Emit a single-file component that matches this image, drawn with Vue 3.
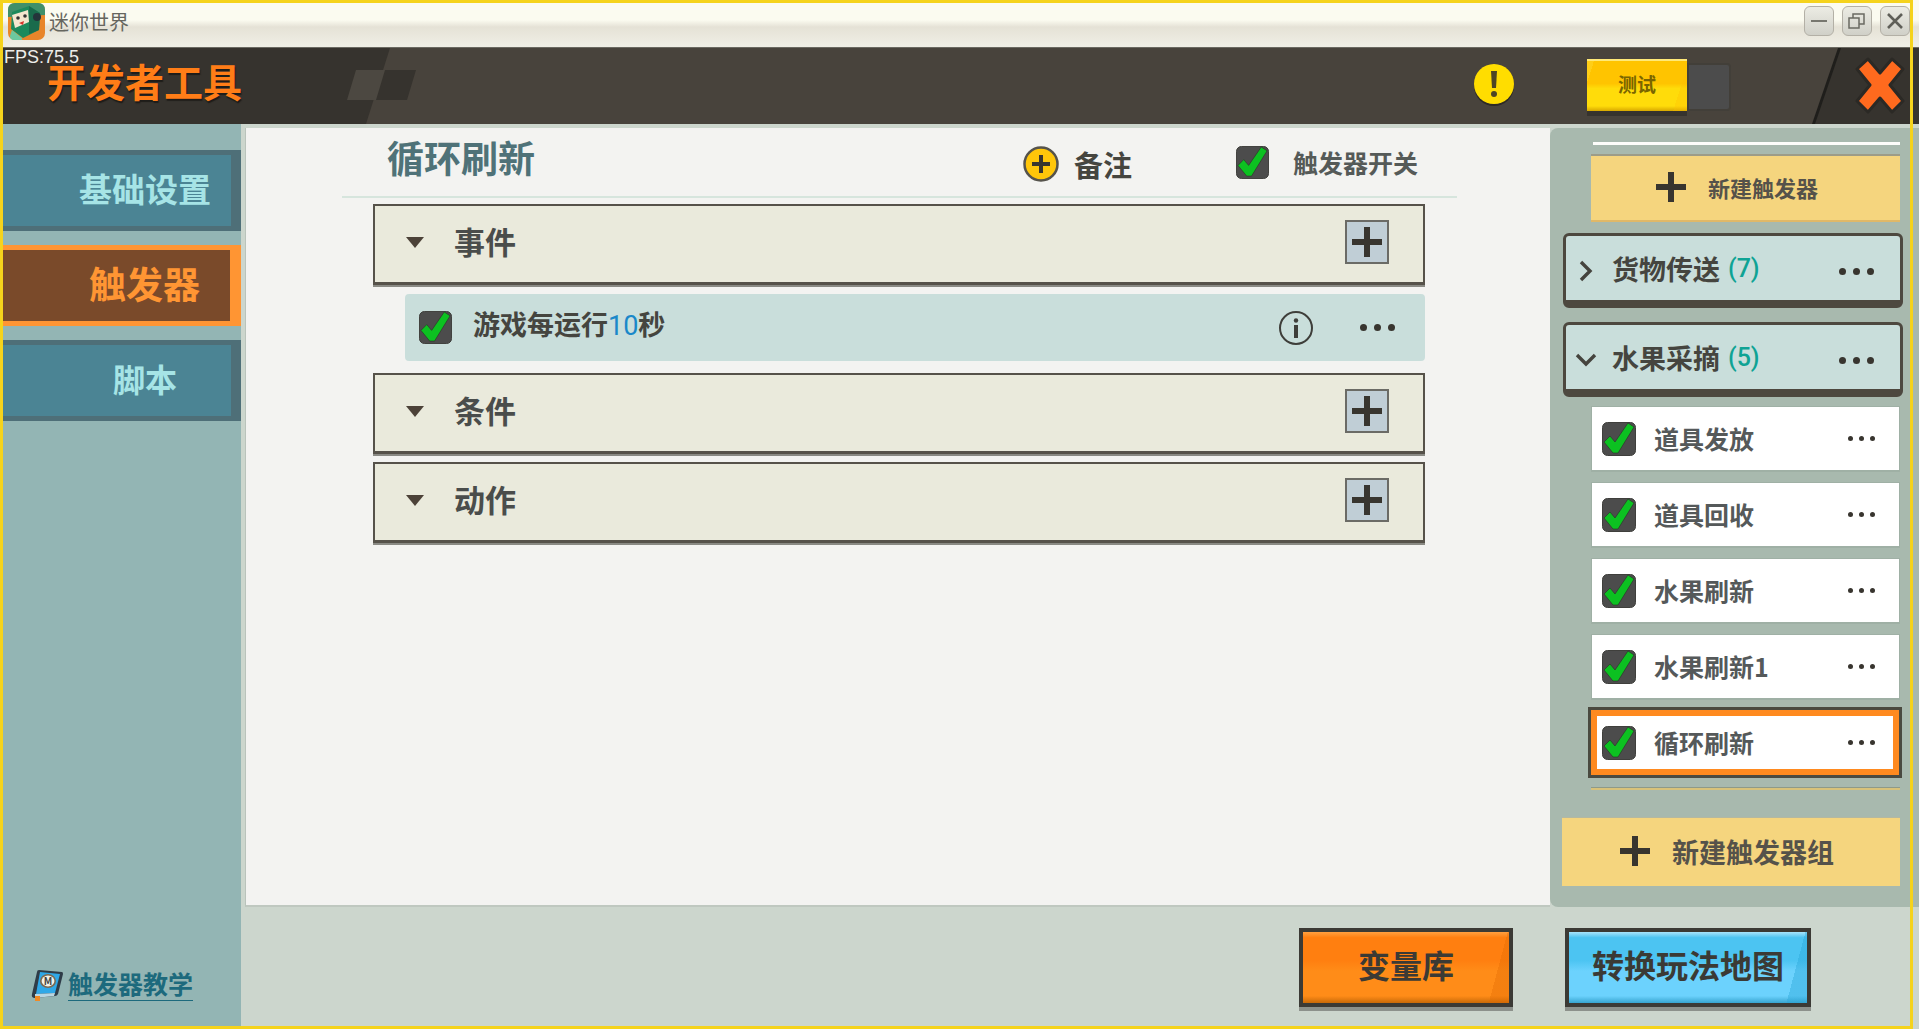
<template>
  <div class="app">
    <svg class="defs" width="0" height="0">
      <symbol id="check" viewBox="0 0 34 34">
        <rect x="0.5" y="0.5" width="33" height="33" rx="5" fill="#4c4c4c" stroke="#3f3f3c" />
        <path d="M2 20 L8 14 L13 20 L26 1 L32 5 L16 31 L11 31 Z" fill="#0cc121" stroke="#2c2c28" stroke-width="0.6" />
      </symbol>
      <symbol id="plus" viewBox="0 0 30 30">
        <path d="M12 0h6v12h12v6H18v12h-6V18H0v-6h12z" fill="#38352f" />
      </symbol>
    </svg>

    <div class="titlebar">
      <svg class="app-icon" viewBox="0 0 37 37">
        <rect width="37" height="37" rx="7" fill="#e8852a" />
        <path d="M0 7 Q0 0 7 0 H30 Q37 0 37 7 V12 L0 14 Z" fill="#3f8f6a" />
        <path d="M4 9 L21 3 L32 10 L31 27 L15 35 L3 26 Z" fill="#1c8a5c" />
        <path d="M21 3 L32 10 L31 27 L21 31 Z" fill="#1a6b4c" />
        <path d="M4 12 L20 7 L21 19 L7 25 Z" fill="#f4e6cf" />
        <circle cx="29" cy="14" r="4" fill="#24343a" />
        <circle cx="10" cy="15" r="1.8" fill="#333" />
        <circle cx="17" cy="13" r="1.8" fill="#333" />
        <path d="M11 20 L16 18 L15 22 Z" fill="#d6352b" />
        <path d="M4 27 L14 35 L14 37 H6 Q2 37 2 33 Z" fill="#6cc9a0" />
      </svg>
      <span class="app-name">迷你世界</span>
      <div class="win-btns">
        <button class="win-btn"><span class="win-min"></span></button>
        <button class="win-btn">
          <svg width="18" height="18" viewBox="0 0 18 18" fill="none" stroke="#6a6a62" stroke-width="1.5">
            <rect x="1" y="6" width="10" height="10" />
            <path d="M5 6V2h11v10h-5" />
          </svg>
        </button>
        <button class="win-btn">
          <svg width="16" height="16" viewBox="0 0 16 16" stroke="#5f5f58" stroke-width="2.6">
            <path d="M1 1l14 14M15 1L1 15" />
          </svg>
        </button>
      </div>
    </div>

    <div class="header">
      <div class="header-light"></div>
      <div class="header-dark"></div>
      <div class="check-a"></div>
      <div class="check-b"></div>
      <span class="fps">FPS:75.5</span>
      <h1 class="app-title">开发者工具</h1>
      <svg class="warn" viewBox="0 0 42 44">
        <circle cx="21" cy="22" r="20" fill="#2d2a25" />
        <circle cx="21" cy="20" r="20" fill="#ffdd00" />
        <path d="M18 7h6l-1 17h-4z" fill="#4c4525" />
        <circle cx="21" cy="30" r="3" fill="#4c4525" />
      </svg>
      <div class="test-switch">
        <button class="test-btn">测试</button>
        <div class="test-off"></div>
      </div>
      <svg class="close-x" viewBox="0 0 50 60">
        <path
          d="M13 3 L25 17 L37 3 L48 13 L35 29 L48 45 L37 56 L25 42 L13 56 L2 45 L15 29 L2 13 Z"
          fill="#ff6a1e"
          stroke="#2b2925"
          stroke-width="3"
          stroke-linejoin="round"
        />
      </svg>
    </div>

    <div class="body">
      <aside class="sidebar">
        <div class="tabs">
          <div
            v-for="tab in tabs"
            :key="tab.name"
            :class="['tab', tab.active ? 'tab-active' : '']"
            :style="{ fontSize: tab.size + 'px' }"
          >
            {{ tab.name }}
          </div>
        </div>
        <a class="tutorial">
          <svg class="book" viewBox="0 0 34 34">
            <path d="M9 2 L32 4 Q33 4 33 6 L28 26 Q27 28 25 28 L5 30 Q1 30 2 26 L7 4 Q7 2 9 2 Z" fill="#2f3c48" />
            <path d="M10 4 L30 6 L25 25 L6 26 Z" fill="#2fa8e8" />
            <path d="M5 26 L25 25 L24 28 L5 30 Z" fill="#b9d6e2" />
            <ellipse cx="18" cy="13" rx="8" ry="7" fill="#7c6a52" />
            <ellipse cx="18" cy="13" rx="6.4" ry="5.4" fill="#f2f2ea" />
            <text x="18" y="16.5" text-anchor="middle" font-size="10" font-weight="700" fill="#444">M</text>
            <rect x="5" y="28" width="5" height="5" fill="#f08a24" />
          </svg>
          <span>触发器教学</span>
        </a>
      </aside>

      <div class="main">
        <div class="panels">
          <section class="content">
            <div class="head">
              <h2 class="trigger-title">循环刷新</h2>
              <div class="remark">
                <svg width="36" height="36" viewBox="0 0 36 36">
                  <circle cx="18" cy="18" r="16.5" fill="#ffc60a" stroke="#55534c" stroke-width="2.5" />
                  <path d="M16 9h4v7h7v4h-7v7h-4v-7H9v-4h7z" fill="#38352f" />
                </svg>
                <span>备注</span>
              </div>
              <div class="switch">
                <svg class="check" width="33" height="33"><use href="#check" /></svg>
                <span>触发器开关</span>
              </div>
            </div>

            <div class="rows">
              <div class="row">
                <span class="tri"></span>
                <span class="row-label">事件</span>
                <button class="add-btn"><svg width="30" height="30"><use href="#plus" /></svg></button>
              </div>
              <div class="event">
                <svg width="33" height="33"><use href="#check" /></svg>
                <span class="event-text">游戏每运行<b>10</b>秒</span>
                <svg class="info" width="36" height="36" viewBox="0 0 36 36">
                  <circle cx="18" cy="18" r="16" fill="none" stroke="#3e3e3a" stroke-width="2" />
                  <circle cx="18" cy="10.5" r="2.2" fill="#3e3e3a" />
                  <rect x="16" y="15" width="4" height="13" fill="#3e3e3a" />
                </svg>
                <span class="dots"><i></i><i></i><i></i></span>
              </div>
              <div class="row">
                <span class="tri"></span>
                <span class="row-label">条件</span>
                <button class="add-btn"><svg width="30" height="30"><use href="#plus" /></svg></button>
              </div>
              <div class="row">
                <span class="tri"></span>
                <span class="row-label">动作</span>
                <button class="add-btn"><svg width="30" height="30"><use href="#plus" /></svg></button>
              </div>
            </div>
          </section>

          <aside class="right">
            <div class="white-line"></div>
            <button class="new-trigger">
              <svg width="30" height="30"><use href="#plus" /></svg>
              <span>新建触发器</span>
            </button>

            <div class="group">
              <svg class="chev" width="14" height="22" viewBox="0 0 14 22" fill="none" stroke="#45443e" stroke-width="3.4">
                <path d="M2 2l9 9-9 9" />
              </svg>
              <span class="group-name">货物传送</span>
              <span class="group-count">(7)</span>
              <span class="dots"><i></i><i></i><i></i></span>
            </div>
            <div class="group group-open">
              <svg class="chev" width="22" height="14" viewBox="0 0 22 14" fill="none" stroke="#45443e" stroke-width="3.4">
                <path d="M2 2l9 9 9-9" />
              </svg>
              <span class="group-name">水果采摘</span>
              <span class="group-count">(5)</span>
              <span class="dots"><i></i><i></i><i></i></span>
            </div>

            <div class="items">
              <div v-for="item in items" :key="item.name" :class="['item', item.active ? 'item-active' : '']">
                <svg width="34" height="34"><use href="#check" /></svg>
                <span class="item-name">{{ item.name }}</span>
                <span class="dots dots-small"><i></i><i></i><i></i></span>
              </div>
            </div>
            <div class="item-end"></div>

            <button class="new-group">
              <svg width="30" height="30"><use href="#plus" /></svg>
              <span>新建触发器组</span>
            </button>
          </aside>
        </div>

        <div class="footer">
          <button class="big-btn orange">变量库</button>
          <button class="big-btn blue">转换玩法地图</button>
        </div>
      </div>
    </div>

    <div class="frame"></div>
  </div>
</template>

<script setup>
const tabs = [
  { name: "基础设置", size: 33 },
  { name: "触发器", size: 37, active: true },
  { name: "脚本", size: 32 },
];

const items = [
  { name: "道具发放" },
  { name: "道具回收" },
  { name: "水果刷新" },
  { name: "水果刷新1" },
  { name: "循环刷新", active: true },
];
</script>

<style>
html,
body {
  margin: 0;
  overflow: hidden;
}
</style>

<style scoped>
.app {
  position: relative;
  display: flex;
  flex-direction: column;
  width: 1919px;
  height: 1029px;
  overflow: hidden;
  font-family: "Noto Sans CJK SC", "Noto Sans", sans-serif;
  color: #4a4a46;
  background: #ccd6cd;
}

.defs {
  position: absolute;
}

button {
  font-family: inherit;
  padding: 0;
  cursor: pointer;
}

h1,
h2 {
  margin: 0;
}

/* title bar */
.titlebar {
  display: flex;
  flex: none;
  align-items: center;
  box-sizing: border-box;
  height: 48px;
  padding: 3px 9px 0 8px;
  background: linear-gradient(#fbfbf0 0, #fbfbf0 20px, #e5e2d6 27px, #f0efe6 100%);
  border-bottom: 1px solid #6b6a62;
}

.app-icon {
  width: 37px;
  height: 37px;
  margin-top: -8px;
}

.app-name {
  margin-left: 4px;
  margin-top: -6px;
  font-size: 20px;
  line-height: 1;
  color: #66665f;
}

.win-btns {
  display: flex;
  gap: 8px;
  margin-left: auto;
  margin-top: -8px;
}

.win-btn {
  display: flex;
  align-items: center;
  justify-content: center;
  width: 30px;
  height: 30px;
  background: linear-gradient(#ececE4, #d0d0c8);
  border: 1px solid #b3b0a6;
  border-radius: 6px;
}

.win-min {
  width: 16px;
  height: 2px;
  background: #77776f;
}

/* dark header */
.header {
  position: relative;
  display: flex;
  align-items: center;
  flex: none;
  height: 76px;
  background: #36332e;
}

.header-light {
  position: absolute;
  inset: 0 0 0 366px;
  background: #48433c;
  clip-path: polygon(24px 0, 100% 0, 100% 100%, 0 100%);
}

.header-dark {
  position: absolute;
  inset: 0 0 0 1812px;
  background: #1f1e1b;
  clip-path: polygon(26px 0, 100% 0, 100% 100%, 0 100%);
}

.header-dark::after {
  content: "";
  position: absolute;
  inset: 0 0 0 3px;
  background: #36332e;
  clip-path: polygon(26px 0, 100% 0, 100% 100%, 0 100%);
}

.check-a,
.check-b {
  position: absolute;
  top: 22px;
  height: 30px;
}

.check-a {
  left: 347px;
  width: 40px;
  background: #4c4841;
  clip-path: polygon(9px 0, 100% 0, 31px 100%, 0 100%);
}

.check-b {
  left: 376px;
  width: 40px;
  background: #36332e;
  clip-path: polygon(9px 0, 100% 0, 31px 100%, 0 100%);
}

.fps {
  position: absolute;
  left: 4px;
  top: -1px;
  font-family: "Liberation Sans", sans-serif;
  font-size: 18px;
  line-height: 20px;
  color: #eeeeea;
  z-index: 1;
}

.app-title {
  position: relative;
  margin-left: 47px;
  margin-top: -12px;
  font-size: 39px;
  font-weight: 700;
  line-height: 1;
  color: #ff7d17;
  text-shadow: 1px 2px 1px #1e1c19;
}

.warn {
  position: relative;
  width: 42px;
  height: 44px;
  margin-left: 1231px;
}

.test-switch {
  position: relative;
  display: flex;
  align-items: flex-start;
  margin-left: 72px;
  margin-top: -2px;
}

.test-btn {
  width: 100px;
  height: 52px;
  padding-bottom: 5px;
  font-size: 19px;
  font-weight: 700;
  color: #7a6500;
  background:
    linear-gradient(108deg, rgba(255, 236, 90, 0.25) 0 6%, transparent 6% 88%, rgba(255, 190, 0, 0.3) 88%),
    linear-gradient(#ffc400 0, #ffc400 45%, #ffdc0a 55%, #ffdc0a 90%, #d8a800 100%);
  border: none;
  border-top: 2px solid #ffe978;
  box-shadow: 0 5px 0 #36332e;
}

.test-off {
  width: 44px;
  height: 48px;
  margin-top: 4px;
  background: #4c4c4c;
  border: 2px solid #423f39;
  border-radius: 0 4px 4px 0;
  box-sizing: border-box;
}

.close-x {
  position: relative;
  width: 50px;
  height: 60px;
  margin-left: 124px;
}

/* body */
.body {
  display: flex;
  flex: 1;
  min-height: 0;
}

.sidebar {
  display: flex;
  flex-direction: column;
  box-sizing: border-box;
  width: 241px;
  padding: 26px 0 27px 3px;
  background: #93b5b4;
}

.tabs {
  display: flex;
  flex-direction: column;
  gap: 14px;
}

.tab {
  display: flex;
  align-items: center;
  justify-content: center;
  box-sizing: border-box;
  height: 81px;
  padding: 0 0 6px 56px;
  font-weight: 700;
  color: #a6e4e6;
  background: #4b8494;
  border-style: solid;
  border-color: #4e6f78;
  border-width: 5px 10px 5px 0;
}

.tab-active {
  color: #ff9533;
  background: #7a4a2a;
  border-color: #ff9533;
  border-width: 5px 11px 5px 0;
}

.tutorial {
  display: flex;
  align-items: center;
  margin-top: auto;
  margin-left: 27px;
  font-size: 25px;
  font-weight: 700;
  line-height: 32px;
  color: #1d6a7d;
}

.tutorial span {
  margin-left: 4px;
  border-bottom: 1px solid #1d6a7d;
  height: 30px;
  line-height: 26px;
}

.book {
  width: 34px;
  height: 34px;
}

.main {
  display: flex;
  flex: 1;
  flex-direction: column;
  min-width: 0;
}

.panels {
  display: flex;
  flex: none;
  box-sizing: border-box;
  height: 783px;
  padding-top: 4px;
  background: #ccd6cd;
}

/* centre panel */
.content {
  flex: 1;
  min-width: 0;
  margin-left: 4px;
  background: #f3f3f1;
  border-left: 1px solid #b9c3bb;
  border-bottom: 2px solid #bfc8c0;
}

.head {
  display: flex;
  align-items: center;
  box-sizing: border-box;
  height: 70px;
  margin: 0 93px 0 96px;
  padding: 0 39px 0 45px;
  border-bottom: 2px solid #d6e5dd;
}

.trigger-title {
  margin-top: -10px;
  font-size: 37px;
  font-weight: 700;
  line-height: 1;
  color: #4f7278;
}

.remark {
  display: flex;
  align-items: center;
  gap: 15px;
  margin-top: 4px;
  margin-left: auto;
  font-size: 29px;
  font-weight: 700;
  line-height: 1;
  color: #45453f;
}

.switch {
  display: flex;
  align-items: center;
  gap: 24px;
  margin-left: 104px;
  font-size: 25px;
  font-weight: 700;
  line-height: 1;
  color: #555a58;
}

.rows {
  display: flex;
  flex-direction: column;
  gap: 8px;
  margin: 6px 125px 0 127px;
}

.row {
  display: flex;
  align-items: center;
  box-sizing: border-box;
  height: 81px;
  padding: 0 34px 4px 31px;
  background: #eaeadc;
  border: 2px solid #56524a;
  border-bottom-width: 3px;
  box-shadow: 0 2px 0 #8a8a84;
}

.tri {
  width: 0;
  height: 0;
  border-style: solid;
  border-width: 11px 9px 0;
  border-color: #4c4238 transparent transparent;
}

.row-label {
  margin-left: 30px;
  margin-top: -3px;
  font-size: 31px;
  font-weight: 700;
  line-height: 1;
  color: #4a4d4b;
}

.add-btn {
  display: flex;
  align-items: center;
  justify-content: center;
  width: 44px;
  height: 44px;
  margin-left: auto;
  background: #c0ced6;
  border: 2px solid #6b6b66;
}

.event {
  display: flex;
  align-items: center;
  box-sizing: border-box;
  height: 67px;
  margin: 1px 0 4px 32px;
  padding: 0 30px 0 14px;
  background: #c9dedb;
  border-radius: 4px;
}

.event-text {
  margin-left: 21px;
  margin-top: -5px;
  font-size: 27px;
  font-weight: 700;
  line-height: 1;
  color: #45453f;
}

.event-text b {
  font-family: "Roboto", sans-serif;
  font-weight: 400;
  color: #1a88c9;
}

.info {
  margin-left: auto;
  margin-right: 46px;
}

.dots {
  display: flex;
  gap: 7px;
}

.dots i {
  width: 7px;
  height: 7px;
  background: #38352f;
  border-radius: 50%;
}

.dots-small {
  gap: 6px;
}

.dots-small i {
  width: 5px;
  height: 5px;
}

/* right panel */
.right {
  box-sizing: border-box;
  flex: none;
  width: 369px;
  padding: 14px 18px 0 13px;
  background: #a8b9ae;
  border-radius: 8px 0 0 8px;
}

.white-line {
  height: 3px;
  margin-left: 30px;
  margin-right: 1px;
  background: #fdfdfa;
}

.new-trigger,
.new-group {
  display: flex;
  align-items: center;
  box-sizing: border-box;
  font-weight: 700;
  color: #55524a;
  background: #f5d57e;
  border: none;
  border-top: 2px solid #9c9c88;
}

.new-trigger {
  width: 309px;
  height: 68px;
  margin: 9px 0 0 28px;
  padding: 0 0 2px 65px;
  font-size: 22px;
  gap: 22px;
  border-bottom: 2px solid #e0b868;
}

.new-group {
  width: 338px;
  height: 69px;
  margin: 27px 0 0 -1px;
  padding: 0 0 2px 58px;
  font-size: 27px;
  gap: 22px;
  border-top: 1px solid #b5b8a0;
}

.group {
  display: flex;
  align-items: center;
  box-sizing: border-box;
  width: 340px;
  height: 75px;
  margin-top: 11px;
  padding: 0 26px 0 0;
  background: #c9dedb;
  border: 3px solid #4d483f;
  border-bottom-width: 8px;
  border-radius: 6px;
}

.group-open {
  margin-top: 14px;
}

.chev {
  margin-left: 13px;
  margin-right: 19px;
  margin-top: 5px;
}

.group-open .chev {
  margin-left: 9px;
  margin-right: 15px;
}

.group-name {
  font-size: 27px;
  font-weight: 700;
  line-height: 1;
  color: #45453f;
}

.group-count {
  margin-left: 8px;
  font-family: "Roboto", sans-serif;
  font-size: 25px;
  font-weight: 500;
  line-height: 1;
  color: #0fa394;
}

.group .dots {
  margin-left: auto;
  margin-top: 6px;
}

.items {
  display: flex;
  flex-direction: column;
  gap: 10px;
  margin: 9px 0 0 28px;
  width: 309px;
}

.item {
  display: flex;
  align-items: center;
  box-sizing: border-box;
  height: 66px;
  padding: 0 24px 0 10px;
  background: #fff;
  border: 1px solid #9fb0a5;
  border-bottom-width: 2px;
}

.item-active {
  margin: -3px -2px -1px -3px;
  height: 71px;
  padding: 0 24px 0 11px;
  border: 3px solid #4a4a40;
  outline: 6px solid #ff8a1f;
  outline-offset: -9px;
}

.item-name {
  margin-left: 18px;
  font-size: 25px;
  font-weight: 700;
  line-height: 1;
  color: #55595a;
}

.item .dots {
  margin-left: auto;
}

.item-end {
  width: 309px;
  height: 2px;
  margin: 10px 0 0 28px;
  background: #d8c27a;
  border-top: 1px solid #8f9a88;
}

/* footer buttons */
.footer {
  display: flex;
  justify-content: flex-end;
  gap: 52px;
  padding: 21px 108px 0 0;
}

.big-btn {
  box-sizing: border-box;
  height: 79px;
  padding-bottom: 7px;
  font-size: 32px;
  font-weight: 700;
  color: #3b3a35;
  border: 4px solid #3b3a35;
  box-shadow: 0 4px 0 #8c918b;
}

.orange {
  width: 214px;
  background:
    linear-gradient(105deg, transparent 91%, rgba(225, 105, 0, 0.35) 91%),
    linear-gradient(#ffa040 0, #ff7f10 8%, #ff7f10 40%, #ff8c18 55%, #ff8c18 90%, #c96a08 100%);
}

.blue {
  width: 246px;
  background:
    linear-gradient(105deg, transparent 92%, rgba(40, 165, 215, 0.4) 92%),
    linear-gradient(#a8e4fb 0, #4cc4f2 8%, #4cc4f2 40%, #6cd2fd 55%, #6cd2fd 90%, #37a4cf 100%);
}

/* yellow capture frame over the window */
.frame {
  position: absolute;
  top: 0;
  left: 0;
  box-sizing: border-box;
  width: 1913px;
  height: 1029px;
  border: 3px solid #f5d31c;
  pointer-events: none;
}
</style>
